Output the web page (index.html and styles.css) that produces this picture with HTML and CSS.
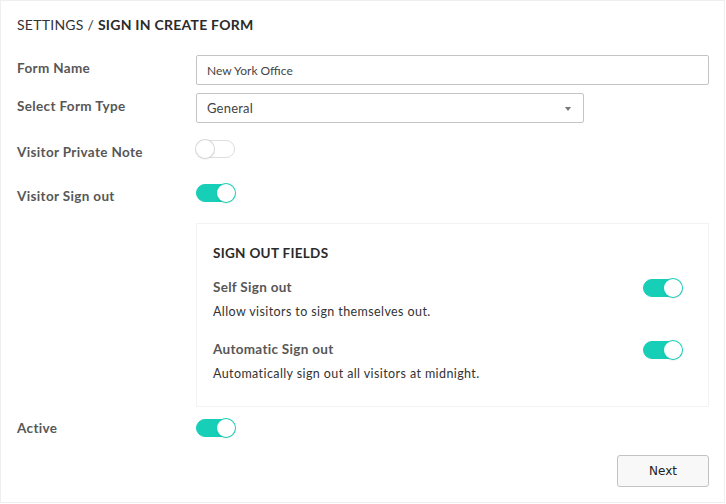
FILE: index.html
```html
<!DOCTYPE html>
<html lang="en">
<head>
<meta charset="utf-8">
<title>Sign In Create Form</title>
<link rel="stylesheet" href="styles.css">
</head>
<body>
<div class="card">
  <h1 class="title"><span class="crumb">SETTINGS / </span><strong>SIGN IN CREATE FORM</strong></h1>

  <div class="row row-name">
    <label class="label label-input">Form Name</label>
    <div class="field"><input class="input" type="text" value="New York Office"></div>
  </div>

  <div class="row row-type">
    <label class="label label-input">Select Form Type</label>
    <div class="field">
      <div class="select"><span>General</span><span class="caret"></span></div>
    </div>
  </div>

  <div class="row row-toggle row-note">
    <label class="label label-toggle">Visitor Private Note</label>
    <div class="field"><span class="toggle"></span></div>
  </div>

  <div class="row row-toggle row-signout">
    <label class="label label-toggle">Visitor Sign out</label>
    <div class="field"><span class="toggle on"></span></div>
  </div>

  <div class="row row-box">
    <div class="spacer"></div>
    <div class="box">
      <h2 class="box-title">SIGN OUT FIELDS</h2>
      <div class="opt">
        <div class="opt-text">
          <div class="opt-name">Self Sign out</div>
          <div class="opt-desc">Allow visitors to sign themselves out.</div>
        </div>
        <span class="toggle on"></span>
      </div>
      <div class="opt opt-2">
        <div class="opt-text">
          <div class="opt-name">Automatic Sign out</div>
          <div class="opt-desc">Automatically sign out all visitors at midnight.</div>
        </div>
        <span class="toggle on"></span>
      </div>
    </div>
  </div>

  <div class="row row-toggle row-active">
    <label class="label">Active</label>
    <div class="field"><span class="toggle on"></span></div>
  </div>

  <div class="actions">
    <button class="btn" type="button">Next</button>
  </div>
</div>
</body>
</html>
```

FILE: styles.css
```css
* { box-sizing: border-box; }

body {
  margin: 0;
  background: #ffffff;
  font-family: Lato, "Open Sans", sans-serif;
}

.card {
  width: 725px;
  height: 503px;
  border: 1px solid #efefef;
  padding: 14px 15px 0 16px;
  background: #fff;
}

.title {
  margin: 0;
  font-size: 14px;
  line-height: 20px;
  font-weight: 400;
  color: #333;
  letter-spacing: 0.25px;
}
.title strong { font-weight: 700; color: #2b2b2b; }

.row {
  display: flex;
  align-items: center;
}

.label {
  width: 179px;
  flex: none;
  font-size: 13.5px;
  font-weight: 700;
  color: #575757;
  letter-spacing: 0.35px;
}
.label-input { padding-bottom: 4px; }
.label-toggle { padding-top: 5px; }

.field { flex: 1; }

.row-name { margin-top: 20px; height: 30px; }
.row-type { margin-top: 8px; height: 30px; }
.row-note { margin-top: 17px; }
.row-signout { margin-top: 26px; }
.row-box { margin-top: 21px; align-items: stretch; }
.row-active { margin-top: 12px; }

.row-toggle { height: 18px; }

.input {
  display: block;
  width: 100%;
  height: 30px;
  border: 1px solid #c4c4c4;
  border-radius: 2px;
  padding: 0 10px;
  font-family: Lato, sans-serif;
  font-size: 12px;
  color: #444;
  outline: none;
}

.select {
  width: 388px;
  height: 30px;
  border: 1px solid #c4c4c4;
  border-radius: 2px;
  padding: 0 10px;
  display: flex;
  align-items: center;
  justify-content: space-between;
  font-size: 13px;
  color: #444;
  letter-spacing: 0.2px;
}

.caret {
  width: 0;
  height: 0;
  border-left: 3px solid transparent;
  border-right: 3px solid transparent;
  border-top: 4px solid #777;
  margin-right: 2px;
  margin-top: 1px;
}

.toggle {
  display: block;
  position: relative;
  width: 39px;
  height: 18px;
  border-radius: 9px;
  background: #fff;
  border: 1px solid #dedede;
}
.toggle::after {
  content: "";
  position: absolute;
  top: -1px;
  left: -1px;
  width: 18px;
  height: 18px;
  border-radius: 50%;
  background: #fff;
  box-shadow: 0 0 0 1px #d6d6d6, 0 1px 2px rgba(0,0,0,0.15);
}
.toggle.on {
  background: #17ceb7;
  border-color: #17ceb7;
}
.toggle.on::after {
  left: auto;
  right: -1px;
  box-shadow: 0 0 0 1px #17ceb7, 0 1px 2px rgba(0,0,0,0.2);
}

.spacer { width: 179px; flex: none; }

.box {
  flex: 1;
  height: 184px;
  border: 1px solid #f2f2f2;
  padding: 20px 26px 0 16px;
}

.box-title {
  margin: 0;
  font-size: 13.5px;
  line-height: 18px;
  font-weight: 700;
  color: #2b2b2b;
  letter-spacing: 0.3px;
}

.opt {
  display: flex;
  justify-content: space-between;
  align-items: flex-start;
  margin-top: 17px;
}
.opt-2 { margin-top: 21px; }

.opt .toggle { margin-top: 0; }

.opt-name {
  font-size: 13.5px;
  font-weight: 700;
  color: #575757;
  line-height: 16px;
  letter-spacing: 0.3px;
}

.opt-desc {
  margin-top: 9px;
  font-size: 12.5px;
  color: #333;
  line-height: 16px;
  letter-spacing: 0.4px;
}

.actions {
  display: flex;
  justify-content: flex-end;
  margin-top: 18px;
}

.btn {
  width: 92px;
  height: 32px;
  border: 1px solid #c2c2c2;
  border-radius: 3px;
  background: #f8f8f8;
  font-family: "DejaVu Sans", "Liberation Sans", sans-serif;
  font-size: 12px;
  color: #222;
  padding: 0;
}
```
